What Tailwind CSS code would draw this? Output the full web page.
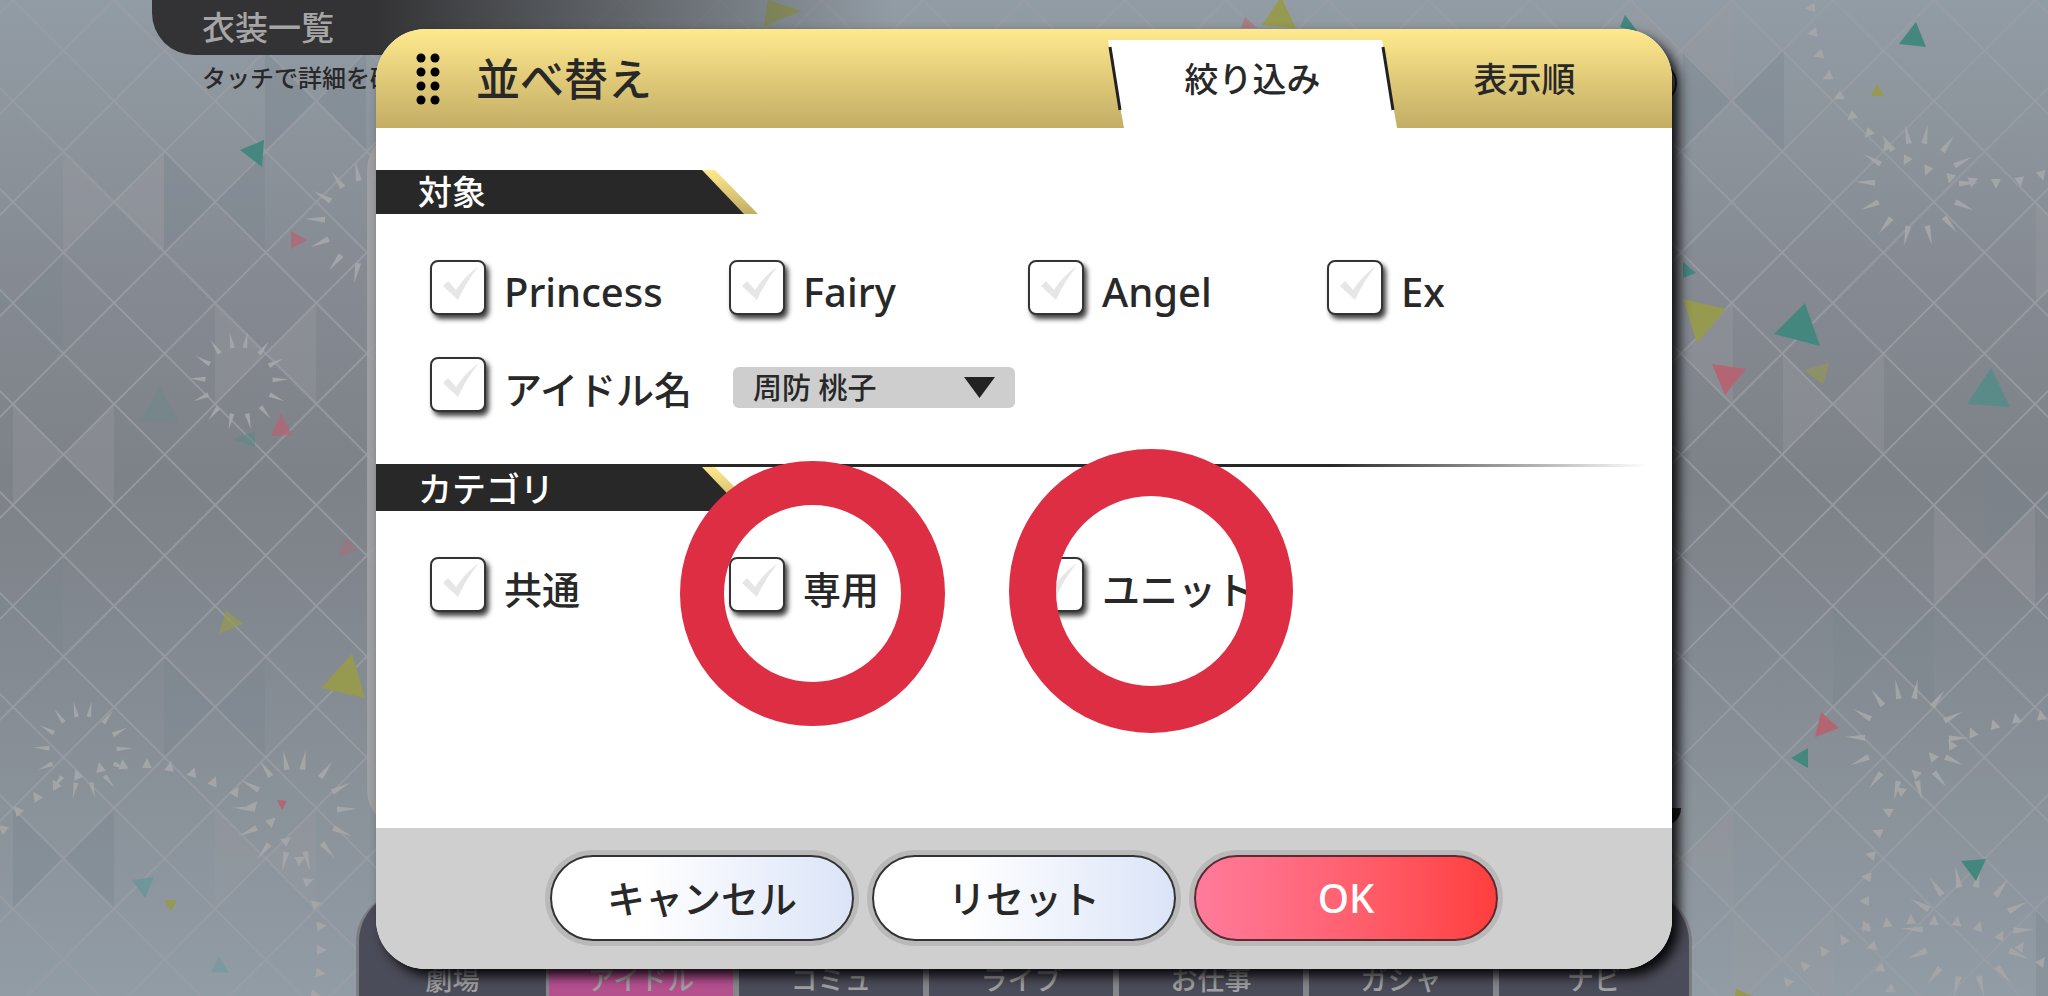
<!DOCTYPE html>
<html lang="ja">
<head>
  <meta charset="UTF-8">
  <meta name="viewport" content="width=device-width, initial-scale=1.0">
  <title>並べ替え</title>
  <script src="https://cdn.jsdelivr.net/npm/@tailwindcss/browser@4"></script>
</head>
<body class="relative min-h-screen overflow-hidden bg-[#868a92] font-['Noto_Sans','Noto_Sans_CJK_JP',sans-serif] font-medium text-[#282828]">

<!-- Backdrop: lattice, confetti, sparkles -->
<svg class="absolute inset-0 w-full h-full" viewBox="0 0 2048 996" preserveAspectRatio="xMidYMid slice" aria-hidden="true">
  <defs>
    <linearGradient id="sky" x1="0" y1="0" x2="0" y2="1">
      <stop offset="0" stop-color="#929ca4"/>
      <stop offset="0.27" stop-color="#868b93"/>
      <stop offset="0.48" stop-color="#7d8188"/>
      <stop offset="0.72" stop-color="#868d95"/>
      <stop offset="1" stop-color="#929ca4"/>
    </linearGradient>
    <pattern id="lattice" x="13" y="0" width="101.1" height="101" patternUnits="userSpaceOnUse">
      <path d="M0 0L101.1 101M101.1 0L0 101" stroke="#9a9ea5" stroke-width="1.8" stroke-opacity="0.85"/>
    </pattern>
    <path id="bow" d="M0 0L50.5 50.5L101 0V101L50.5 50.5L0 101Z"/>
    <path id="ray" d="M-3 -42L3 -42L0 -62Z"/>
    <g id="burst">
      <use href="#ray" transform="rotate(10)"/><use href="#ray" transform="rotate(37)"/>
      <use href="#ray" transform="rotate(63)"/><use href="#ray" transform="rotate(88)"/>
      <use href="#ray" transform="rotate(114)"/><use href="#ray" transform="rotate(140)"/>
      <use href="#ray" transform="rotate(166)"/><use href="#ray" transform="rotate(192)"/>
      <use href="#ray" transform="rotate(218)"/><use href="#ray" transform="rotate(246)"/>
      <use href="#ray" transform="rotate(273)"/><use href="#ray" transform="rotate(300)"/>
      <use href="#ray" transform="rotate(325)"/><use href="#ray" transform="rotate(349)"/>
    </g>
    <marker id="flagUp" markerUnits="userSpaceOnUse" markerWidth="16" markerHeight="16" refX="8" refY="8" orient="auto">
      <path d="M3 13L8 3L13 13Z" fill="#a3a5a7"/>
    </marker>
    <marker id="flagDown" markerUnits="userSpaceOnUse" markerWidth="16" markerHeight="16" refX="8" refY="8" orient="auto">
      <path d="M3 3L8 13L13 3Z" fill="#a3a5a7"/>
    </marker>
  </defs>
  <rect width="2048" height="996" fill="url(#sky)"/>

  <g fill="#78848b" fill-opacity="0.35">
    <use href="#bow" x="164" y="151"/><use href="#bow" x="-38" y="252"/><use href="#bow" x="265" y="50"/>
    <use href="#bow" x="-38" y="555"/><use href="#bow" x="164" y="656"/><use href="#bow" x="13" y="808"/>
    <use href="#bow" x="1683" y="50"/><use href="#bow" x="1985" y="454"/><use href="#bow" x="1833" y="606"/>
    <use href="#bow" x="2036" y="908"/>
  </g>
  <g fill="#9c9ca0" fill-opacity="0.35">
    <use href="#bow" x="63" y="151"/><use href="#bow" x="215" y="303"/><use href="#bow" x="13" y="404"/>
    <use href="#bow" x="215" y="808"/><use href="#bow" x="1632" y="0"/><use href="#bow" x="1632" y="303"/>
    <use href="#bow" x="1783" y="353"/><use href="#bow" x="2036" y="202"/><use href="#bow" x="1934" y="505"/>
    <use href="#bow" x="1632" y="808"/><use href="#bow" x="1733" y="908"/>
  </g>
  <rect width="2048" height="996" fill="url(#lattice)"/>

  <g fill="#a3a5a7">
    <use href="#burst" transform="translate(239 381) scale(0.8)"/>
    <use href="#burst" transform="translate(367 222)"/>
    <use href="#burst" transform="translate(83 750) scale(0.8)"/>
    <use href="#burst" transform="translate(295 811)"/>
    <use href="#burst" transform="translate(1917 185)"/>
    <use href="#burst" transform="translate(1907 740)"/>
    <use href="#burst" transform="translate(1968 932) scale(1.08)"/>
  </g>
  <polyline fill="none" marker-start="url(#flagUp)" marker-mid="url(#flagUp)" marker-end="url(#flagUp)" points="2,828 17,810 36,796 55,784 77,774 100,767 123,764 147,763 170,766 193,772 214,781 236,791 254,805 272,821 287,840 301,859 309,881 317,904 322,926 322,950 321,973 316,995"/>
  <polyline fill="none" marker-start="url(#flagDown)" marker-mid="url(#flagDown)" marker-end="url(#flagDown)" points="1810,8 1812,33 1818,55 1827,77 1838,97 1851,117 1868,134 1886,148 1906,161 1927,171 1950,179 1972,183 1996,184 2020,182 2042,176"/>
  <polyline fill="none" marker-start="url(#flagDown)" marker-mid="url(#flagDown)" marker-end="url(#flagDown)" points="2041,715 2016,718 1994,724 1972,732 1951,744 1932,756 1915,773 1900,790 1887,811 1877,832 1870,855 1866,877 1864,901 1865,928 1871,947 1879,969 1889,990"/>
  <polyline fill="none" marker-start="url(#flagUp)" marker-mid="url(#flagUp)" marker-end="url(#flagUp)" points="1787,981 1804,965 1823,950 1843,939 1865,925 1887,922 1911,919 1934,920 1957,921 1979,926 2001,935 2021,946 2042,961"/>

  <g fill="#43877f">
    <path d="M240 150L264 140L262 167Z"/>
    <path d="M1916 22L1899 44L1926 47Z"/>
    <path d="M1683 262L1696 273L1683 278Z"/>
    <path d="M1805 303L1774 334L1820 346Z"/>
    <path d="M1791 758L1808 748L1808 768Z"/>
    <path d="M1961 861L1986 859L1976 881Z"/>
    <path d="M1625 15L1620 27L1638 32Z"/>
  </g>
  <g fill="#5a8b89">
    <path d="M1991 368L1967 404L2010 407Z"/>
    <path d="M233 439L255 431L255 447Z" opacity="0.6"/>
    <path d="M160 387L139 422L179 423Z" opacity="0.25"/>
    <path d="M132 880L154 877L145 898Z" fill="#6f9698"/>
    <path d="M219 956L211 972L229 973Z" fill="#7a9a9f"/>
  </g>
  <g fill="#b26673">
    <path d="M291 231L307 240L291 249Z" opacity="0.8"/>
    <path d="M281 413L271 436L292 435Z" opacity="0.8"/>
    <path d="M345 537L338 557L357 550Z" opacity="0.4"/>
    <path d="M277 800L287 801L282 810Z"/>
    <path d="M1712 364L1746 369L1725 395Z"/>
    <path d="M1821 712L1839 728L1815 737Z"/>
    <path d="M1245 17L1241 28L1257 28Z" opacity="0.6"/>
  </g>
  <g fill="#959a50">
    <path d="M226 610L219 634L243 624Z" opacity="0.7"/>
    <path d="M352 654L321 688L365 698Z"/>
    <path d="M164 900L177 900L171 911Z"/>
    <path d="M1877 84L1871 96L1884 96Z"/>
    <path d="M1683 299L1726 309L1697 343Z"/>
    <path d="M1804 370L1829 363L1823 385Z" opacity="0.6"/>
    <path d="M1736 989L1753 996L1735 996Z"/>
    <path d="M1281 -3L1262 25L1296 28Z"/>
    <path d="M768 0L764 26L802 11Z" opacity="0.8"/>
  </g>
</svg>

<!-- Screen behind the dialog -->
<header class="absolute top-0 left-[152px] right-0">
  <div class="h-[55px] w-[740px] pl-[50px] flex items-center rounded-bl-[42px] bg-linear-to-r from-[#333335] from-30% to-[#333335]/0">
    <h1 class="text-[33px] leading-none text-[#a6a6a6]">衣装一覧</h1>
  </div>
  <p class="mt-[11px] pl-[50px] text-2xl leading-none">タッチで詳細を確認</p>
</header>
<div class="absolute top-[130px] inset-x-0 mx-auto w-full max-w-[1314px] h-[700px] rounded-[40px] bg-[#a0a1a2]/90 [clip-path:inset(0_50%_0_0)]"></div>
<div class="absolute top-[62px] inset-x-0 mx-auto w-full max-w-[1306px] h-[42px] rounded-full border-2 border-[#202020] [clip-path:inset(0_0_0_50%)]"></div>
<div class="absolute top-[808px] inset-x-0 mx-auto w-full max-w-[1314px] h-[18px] rounded-b-full bg-[#202022] [clip-path:inset(0_0_0_50%)]"></div>

<nav class="absolute bottom-0 inset-x-0 mx-auto w-full max-w-[1336px] h-[104px] grid grid-cols-7 rounded-t-[50px] overflow-hidden border-x-3 border-[#7b7d80] bg-[#4b4c59] text-[27px] leading-8 text-[#a0a0a0]">
  <a href="#" class="flex items-end justify-center border-r-3 border-[#85868a]">劇場</a>
  <a href="#" class="flex items-end justify-center border-r-6 border-[#85868a] bg-[#b5508f]">アイドル</a>
  <a href="#" class="flex items-end justify-center border-r-6 border-[#85868a]">コミュ</a>
  <a href="#" class="flex items-end justify-center border-r-6 border-[#85868a]">ライブ</a>
  <a href="#" class="flex items-end justify-center border-r-6 border-[#85868a]">お仕事</a>
  <a href="#" class="flex items-end justify-center border-r-6 border-[#85868a]">ガシャ</a>
  <a href="#" class="flex items-end justify-center">ナビ</a>
</nav>

<!-- Dialog -->
<form id="sortDialog" role="dialog" aria-labelledby="dialogTitle" class="relative mt-[29px] mx-auto w-full max-w-[1296px] rounded-[50px] bg-white shadow-[7px_7px_12px_rgba(0,0,0,0.9)]">
  <div class="flex items-stretch h-[99px] pl-[40px] rounded-t-[50px] overflow-hidden bg-linear-to-b from-[#ffe98e] to-[#c3ad65]">
    <div class="flex items-center gap-9 flex-1">
      <svg class="w-[24px] h-[52px]" viewBox="0 0 24 52" fill="#000" aria-hidden="true">
        <circle cx="5" cy="5" r="4.5"/><circle cx="19" cy="5" r="4.5"/>
        <circle cx="5" cy="19" r="4.5"/><circle cx="19" cy="19" r="4.5"/>
        <circle cx="5" cy="33" r="4.5"/><circle cx="19" cy="33" r="4.5"/>
        <circle cx="5" cy="47" r="4.5"/><circle cx="19" cy="47" r="4.5"/>
      </svg>
      <h2 id="dialogTitle" class="text-[44px] leading-none">並べ替え</h2>
    </div>
    <div role="tablist" class="flex">
      <button type="button" role="tab" aria-selected="true" class="relative w-[289px] text-[34px] leading-none">
        <svg class="absolute left-0 bottom-0 w-[289px] h-[88px]" viewBox="0 0 289 88" aria-hidden="true">
          <path d="M0 0H274L289 88H16Z" fill="#fff"/>
          <path d="M2 7L12 70M275 7L285 70" stroke="#222" stroke-width="3"/>
        </svg>
        <span class="relative">絞り込み</span>
      </button>
      <button type="button" role="tab" aria-selected="false" class="w-[275px] pr-5 text-[34px] leading-none">表示順</button>
    </div>
  </div>

  <section class="pt-[42px] pb-[52px]">
    <h3 class="w-[382px] h-[44px] bg-linear-to-b from-[#ffe98e] to-[#c3ad65] [clip-path:polygon(0_0,339px_0,100%_100%,0_100%)]">
      <span class="flex items-center w-[368px] h-full pl-[42px] bg-[#282828] text-white text-[34px] leading-none [clip-path:polygon(0_0,326px_0,100%_100%,0_100%)]">対象</span>
    </h3>
    <div class="mt-[46px] pl-[54px] pr-[46px] grid grid-cols-4 gap-y-[42px]">
      <label class="relative flex items-center gap-[18px]">
        <input type="checkbox" name="type" value="princess" class="peer appearance-none shrink-0 w-[56px] h-[55px] rounded-lg border-2 border-[#333] bg-white shadow-[3px_4px_5px_rgba(0,0,0,0.75)]">
        <svg class="absolute left-0 top-0 w-[54px] h-[54px] pointer-events-none fill-[#e6e6e6] peer-checked:fill-[#e0457b]" viewBox="0 0 54 54"><path d="M13 26L18 21L26 30Q35 16 49 6Q36 22 28 40Z"/></svg>
        <span class="mt-2 text-[40px] leading-none">Princess</span>
      </label>
      <label class="relative flex items-center gap-[18px]">
        <input type="checkbox" name="type" value="fairy" class="peer appearance-none shrink-0 w-[56px] h-[55px] rounded-lg border-2 border-[#333] bg-white shadow-[3px_4px_5px_rgba(0,0,0,0.75)]">
        <svg class="absolute left-0 top-0 w-[54px] h-[54px] pointer-events-none fill-[#e6e6e6] peer-checked:fill-[#e0457b]" viewBox="0 0 54 54"><path d="M13 26L18 21L26 30Q35 16 49 6Q36 22 28 40Z"/></svg>
        <span class="mt-2 text-[40px] leading-none">Fairy</span>
      </label>
      <label class="relative flex items-center gap-[18px]">
        <input type="checkbox" name="type" value="angel" class="peer appearance-none shrink-0 w-[56px] h-[55px] rounded-lg border-2 border-[#333] bg-white shadow-[3px_4px_5px_rgba(0,0,0,0.75)]">
        <svg class="absolute left-0 top-0 w-[54px] h-[54px] pointer-events-none fill-[#e6e6e6] peer-checked:fill-[#e0457b]" viewBox="0 0 54 54"><path d="M13 26L18 21L26 30Q35 16 49 6Q36 22 28 40Z"/></svg>
        <span class="mt-2 text-[40px] leading-none">Angel</span>
      </label>
      <label class="relative flex items-center gap-[18px]">
        <input type="checkbox" name="type" value="ex" class="peer appearance-none shrink-0 w-[56px] h-[55px] rounded-lg border-2 border-[#333] bg-white shadow-[3px_4px_5px_rgba(0,0,0,0.75)]">
        <svg class="absolute left-0 top-0 w-[54px] h-[54px] pointer-events-none fill-[#e6e6e6] peer-checked:fill-[#e0457b]" viewBox="0 0 54 54"><path d="M13 26L18 21L26 30Q35 16 49 6Q36 22 28 40Z"/></svg>
        <span class="mt-2 text-[40px] leading-none">Ex</span>
      </label>
      <label class="relative flex items-center gap-[18px]">
        <input type="checkbox" name="byIdol" class="peer appearance-none shrink-0 w-[56px] h-[55px] rounded-lg border-2 border-[#333] bg-white shadow-[3px_4px_5px_rgba(0,0,0,0.75)]">
        <svg class="absolute left-0 top-0 w-[54px] h-[54px] pointer-events-none fill-[#e6e6e6] peer-checked:fill-[#e0457b]" viewBox="0 0 54 54"><path d="M13 26L18 21L26 30Q35 16 49 6Q36 22 28 40Z"/></svg>
        <span class="mt-2 text-[38px] leading-none">アイドル名</span>
      </label>
      <div class="relative ml-1 mt-[10px] w-[282px] h-[41px]">
        <select name="idol" aria-label="アイドル名" class="appearance-none w-full h-full pl-5 rounded-md bg-[#cecece] text-[29px] leading-none">
          <option>周防 桃子</option>
        </select>
        <svg class="absolute right-5 top-[10px] w-[31px] h-[21px] pointer-events-none" viewBox="0 0 31 21" fill="#222"><path d="M0 0H31L15.5 21Z"/></svg>
      </div>
    </div>
  </section>

  <section class="pb-[216px]">
    <div class="h-[3px] mr-6 bg-linear-to-r from-[#282828] from-75% to-transparent"></div>
    <h3 class="w-[382px] h-[44px] bg-linear-to-b from-[#ffe98e] to-[#c3ad65] [clip-path:polygon(0_0,339px_0,100%_100%,0_100%)]">
      <span class="flex items-center w-[368px] h-full pl-[42px] bg-[#282828] text-white text-[34px] leading-none [clip-path:polygon(0_0,326px_0,100%_100%,0_100%)]">カテゴリ</span>
    </h3>
    <div class="mt-[46px] pl-[54px] pr-[46px] grid grid-cols-4">
      <label class="relative flex items-center gap-[18px]">
        <input type="checkbox" name="category" value="common" class="peer appearance-none shrink-0 w-[56px] h-[55px] rounded-lg border-2 border-[#333] bg-white shadow-[3px_4px_5px_rgba(0,0,0,0.75)]">
        <svg class="absolute left-0 top-0 w-[54px] h-[54px] pointer-events-none fill-[#e6e6e6] peer-checked:fill-[#e0457b]" viewBox="0 0 54 54"><path d="M13 26L18 21L26 30Q35 16 49 6Q36 22 28 40Z"/></svg>
        <span class="mt-2 text-[38px] leading-none">共通</span>
      </label>
      <label class="relative flex items-center gap-[18px]">
        <input type="checkbox" name="category" value="exclusive" class="peer appearance-none shrink-0 w-[56px] h-[55px] rounded-lg border-2 border-[#333] bg-white shadow-[3px_4px_5px_rgba(0,0,0,0.75)]">
        <svg class="absolute left-0 top-0 w-[54px] h-[54px] pointer-events-none fill-[#e6e6e6] peer-checked:fill-[#e0457b]" viewBox="0 0 54 54"><path d="M13 26L18 21L26 30Q35 16 49 6Q36 22 28 40Z"/></svg>
        <span class="mt-2 text-[38px] leading-none">専用</span>
        <i class="absolute -left-[49px] -top-[96px] w-[265px] h-[265px] rounded-full border-[44px] border-[#dd2e44] pointer-events-none"></i>
      </label>
      <label class="relative flex items-center gap-[18px]">
        <input type="checkbox" name="category" value="unit" class="peer appearance-none shrink-0 w-[56px] h-[55px] rounded-lg border-2 border-[#333] bg-white shadow-[3px_4px_5px_rgba(0,0,0,0.75)]">
        <svg class="absolute left-0 top-0 w-[54px] h-[54px] pointer-events-none fill-[#e6e6e6] peer-checked:fill-[#e0457b]" viewBox="0 0 54 54"><path d="M13 26L18 21L26 30Q35 16 49 6Q36 22 28 40Z"/></svg>
        <span class="mt-2 text-[38px] leading-none">ユニット</span>
        <i class="absolute -left-[19px] -top-[108px] w-[284px] h-[284px] rounded-full border-[47px] border-[#dd2e44] pointer-events-none"></i>
      </label>
    </div>
  </section>

  <div class="flex justify-center gap-[18px] pt-[27px] pb-[28px] rounded-b-[50px] bg-[#cfcfcf] text-[38px] leading-none">
    <button type="button" class="w-[304px] h-[86px] rounded-full border-2 border-[#333] bg-linear-to-r from-white from-30% to-[#dbe4f7] ring-5 ring-[#b9b9b9]">キャンセル</button>
    <button type="reset" class="w-[304px] h-[86px] rounded-full border-2 border-[#333] bg-linear-to-r from-white from-30% to-[#dbe4f7] ring-5 ring-[#b9b9b9]">リセット</button>
    <button type="submit" class="w-[304px] h-[86px] rounded-full border-2 border-[#5c2a30] bg-linear-to-r from-[#ff7b9c] to-[#ff3d3d] ring-5 ring-[#b9b9b9] text-white text-[40px]">OK</button>
  </div>
</form>

<script>
  document.getElementById("sortDialog").addEventListener("submit", function(event) {
    event.preventDefault();
  });
</script>

</body>
</html>
